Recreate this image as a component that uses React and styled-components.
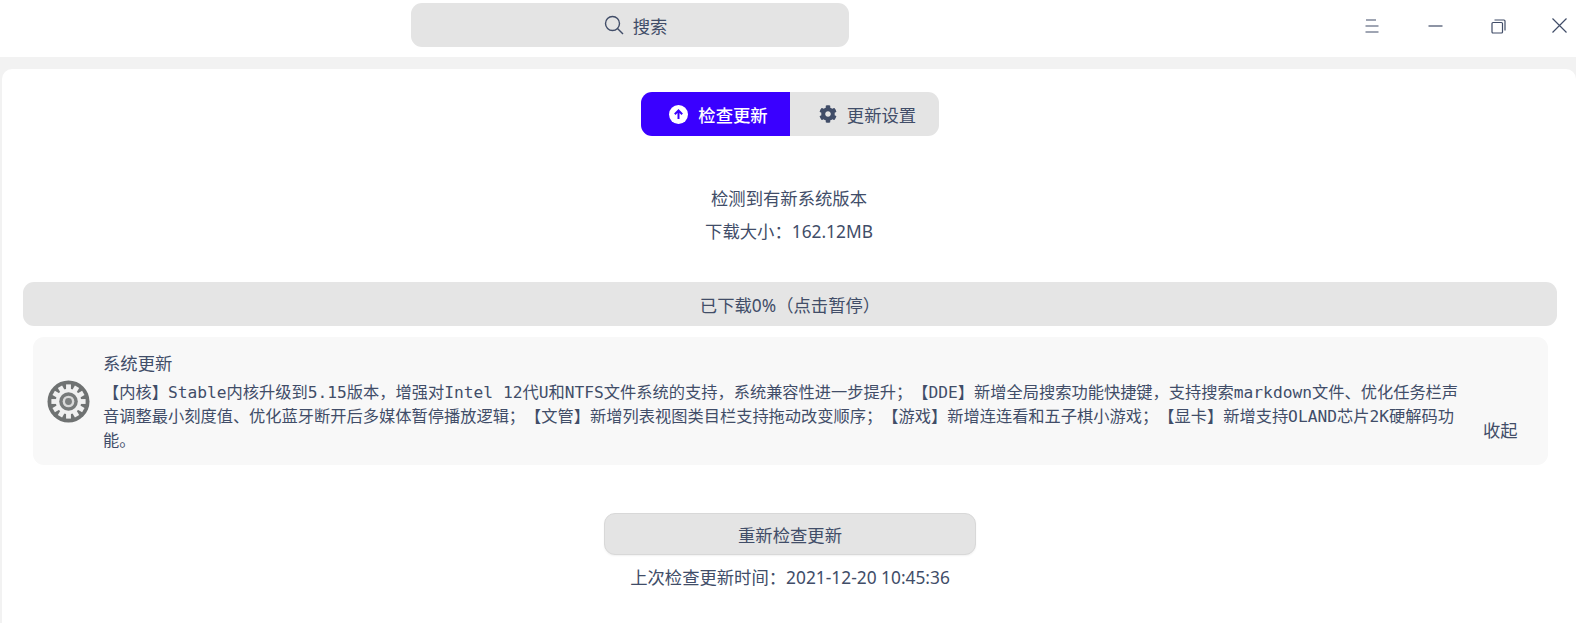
import React from 'react'
import styled, { createGlobalStyle } from 'styled-components'
import { FaCog } from 'react-icons/fa'

const GlobalStyle = createGlobalStyle`
  html, body {
    margin: 0;
    padding: 0;
    background: #f2f2f2;
  }
  body {
    font-family: 'Noto Sans', 'Noto Sans CJK SC', sans-serif;
    color: #414d68;
    font-size: 17.33px;
    text-spacing-trim: space-all;
  }
`

const Page = styled.div`
  width: 1576px;
  height: 623px;
  display: flex;
  flex-direction: column;
  overflow: hidden;
`
const Header = styled.header`
  height: 57px;
  flex: none;
  background: #fff;
  display: flex;
  align-items: flex-start;
  justify-content: space-between;
  padding-left: 411px;
  box-sizing: border-box;
`
const SearchBox = styled.div`
  width: 438px;
  height: 44px;
  margin-top: 3px;
  padding-left: 11px;
  box-sizing: border-box;
  background: #e4e4e4;
  border-radius: 11px;
  display: flex;
  align-items: center;
  justify-content: center;
  gap: 9px;
`
const WindowControls = styled.div`
  display: flex;
  gap: 33px;
  height: 52px;
  padding-right: 2px;
`
const WindowButton = styled.div`
  width: 30px;
  height: 52px;
  display: flex;
  align-items: center;
  justify-content: center;
  box-sizing: border-box;

  &:last-child {
    margin-left: -2px;
    padding-bottom: 1px;
  }
`
const Main = styled.main`
  flex: 1;
  margin: 12px 0 0 2px;
  background: #fff;
  border-radius: 10px 10px 0 0;
  display: flex;
  flex-direction: column;
  align-items: center;
  padding-top: 23px;
`
const Tabs = styled.div`
  display: flex;
  height: 44px;
  margin-left: 2px;
  border-radius: 11px;
  overflow: hidden;
`
const Tab = styled.div`
  width: ${p => p.$width}px;
  padding-left: 6px;
  box-sizing: border-box;
  display: flex;
  align-items: center;
  justify-content: center;
  gap: 10px;
  font-weight: ${p => (p.$active ? 500 : 400)};
  color: ${p => (p.$active ? '#fff' : '#414d68')};
  background: ${p => (p.$active ? '#3a00ff' : '#e4e4e4')};
`
const Status = styled.div`
  margin-top: 46px;
  display: flex;
  flex-direction: column;
  align-items: center;
  line-height: 33px;
`
const ProgressBar = styled.div`
  align-self: stretch;
  margin: 34px 19px 0 21px;
  height: 44px;
  background: #e5e5e5;
  border-radius: 11px;
  display: flex;
  align-items: center;
  justify-content: center;
`
const UpdateCard = styled.section`
  align-self: stretch;
  margin: 11px 28px 0 31px;
  height: 128px;
  box-sizing: border-box;
  background: #f8f8f8;
  border-radius: 11px;
  display: flex;
  align-items: center;
  padding-left: 14px;
`
const AppIcon = styled.svg`
  width: 43px;
  height: 43px;
  flex: none;
  margin-right: 13px;
`
const UpdateBody = styled.div`
  width: 1362px;
  flex: none;
  align-self: flex-start;
  padding-top: 14px;
`
const UpdateTitle = styled.div`
  line-height: 24px;
  margin-bottom: 6px;
`
const UpdateText = styled.div`
  font-family: 'DejaVu Sans Mono', 'Noto Sans CJK SC', monospace;
  font-size: 16.24px;
  line-height: 24px;
  word-break: break-all;
`
const Collapse = styled.div`
  margin-left: 18px;
  align-self: flex-end;
  margin-bottom: 23px;
`
const RecheckButton = styled.button`
  margin-top: 48px;
  margin-left: 2px;
  width: 372px;
  height: 42px;
  font: inherit;
  color: inherit;
  background: #e4e4e4;
  border: 1px solid #d8d8d8;
  border-radius: 11px;
  box-shadow: 0 1px 2px rgba(0, 0, 0, 0.06);
`
const LastCheck = styled.div`
  margin-top: 10px;
  margin-left: 2px;
  line-height: 24px;
`

const SearchIcon = () => (
  <svg width='20' height='20' viewBox='0 0 20 20' fill='none' stroke='#414d68' strokeWidth='1.4'>
    <circle cx='8.5' cy='8.5' r='7' />
    <path d='M13.5 13.5 L19 19' />
  </svg>
)

const MenuIcon = () => (
  <svg width='14' height='14' viewBox='0 0 14 14' fill='none' stroke='#414d68' strokeWidth='1.2'>
    <path d='M1 1H11M0.5 7H13.5M0.5 13H13.5' />
  </svg>
)

const MinimizeIcon = () => (
  <svg width='15' height='4' viewBox='0 0 15 4' fill='none' stroke='#414d68' strokeWidth='1.2'>
    <path d='M0.5 2H14.5' />
  </svg>
)

const RestoreIcon = () => (
  <svg width='15' height='15' viewBox='0 0 15 15' fill='none' stroke='#414d68' strokeWidth='1.2'>
    <rect x='1' y='3.5' width='10.5' height='10.5' rx='1' />
    <path d='M3.5 1H13a1 1 0 0 1 1 1V11.5' />
  </svg>
)

const CloseIcon = () => (
  <svg width='15' height='15' viewBox='0 0 15 15' fill='none' stroke='#414d68' strokeWidth='1.2'>
    <path d='M0.5 0.5L14.5 14.5M14.5 0.5L0.5 14.5' />
  </svg>
)

const ArrowUpCircle = () => (
  <svg width='19' height='19' viewBox='0 0 19 19'>
    <circle cx='9.5' cy='9.5' r='9.5' fill='#fff' />
    <path d='M9.5 14V6M5.8 9.2L9.5 5.5L13.2 9.2' fill='none' stroke='#3a00ff' strokeWidth='2' />
  </svg>
)

const teeth = Array.from({ length: 12 }, (_, i) => i * 30)

const SystemGear = () => (
  <AppIcon viewBox='0 0 44 44'>
    <circle cx='22' cy='22' r='21.5' fill='#6f7272' />
    {teeth.map(angle => (
      <rect key={angle} x='19.5' y='4.5' width='5' height='6' fill='#f0f0f0' transform={`rotate(${angle} 22 22)`} />
    ))}
    <circle cx='22' cy='22' r='13' fill='#f0f0f0' />
    <circle cx='22' cy='22' r='9.5' fill='#777a7a' />
    <circle cx='22' cy='22' r='6' fill='#d9d9d9' />
    <circle cx='22' cy='22' r='3.5' fill='#7d8080' />
  </AppIcon>
)

export default function App () {
  return (
    <Page>
      <GlobalStyle />
      <Header>
        <SearchBox>
          <SearchIcon />
          <span>搜索</span>
        </SearchBox>
        <WindowControls>
          <WindowButton><MenuIcon /></WindowButton>
          <WindowButton><MinimizeIcon /></WindowButton>
          <WindowButton><RestoreIcon /></WindowButton>
          <WindowButton><CloseIcon /></WindowButton>
        </WindowControls>
      </Header>
      <Main>
        <Tabs>
          <Tab $active $width={149}>
            <ArrowUpCircle />
            检查更新
          </Tab>
          <Tab $width={149}>
            <FaCog size={18} color='#414d68' />
            更新设置
          </Tab>
        </Tabs>
        <Status>
          <div>检测到有新系统版本</div>
          <div>下载大小：162.12MB</div>
        </Status>
        <ProgressBar>已下载0%（点击暂停）</ProgressBar>
        <UpdateCard>
          <SystemGear />
          <UpdateBody>
            <UpdateTitle>系统更新</UpdateTitle>
            <UpdateText>
              【内核】Stable内核升级到5.15版本，增强对Intel 12代U和NTFS文件系统的支持，系统兼容性进一步提升；【DDE】新增全局搜索功能快捷键，支持搜索markdown文件、优化任务栏声音调整最小刻度值、优化蓝牙断开后多媒体暂停播放逻辑；【文管】新增列表视图类目栏支持拖动改变顺序；【游戏】新增连连看和五子棋小游戏；【显卡】新增支持OLAND芯片2K硬解码功能。
            </UpdateText>
          </UpdateBody>
          <Collapse>收起</Collapse>
        </UpdateCard>
        <RecheckButton>重新检查更新</RecheckButton>
        <LastCheck>上次检查更新时间：2021-12-20 10:45:36</LastCheck>
      </Main>
    </Page>
  )
}
